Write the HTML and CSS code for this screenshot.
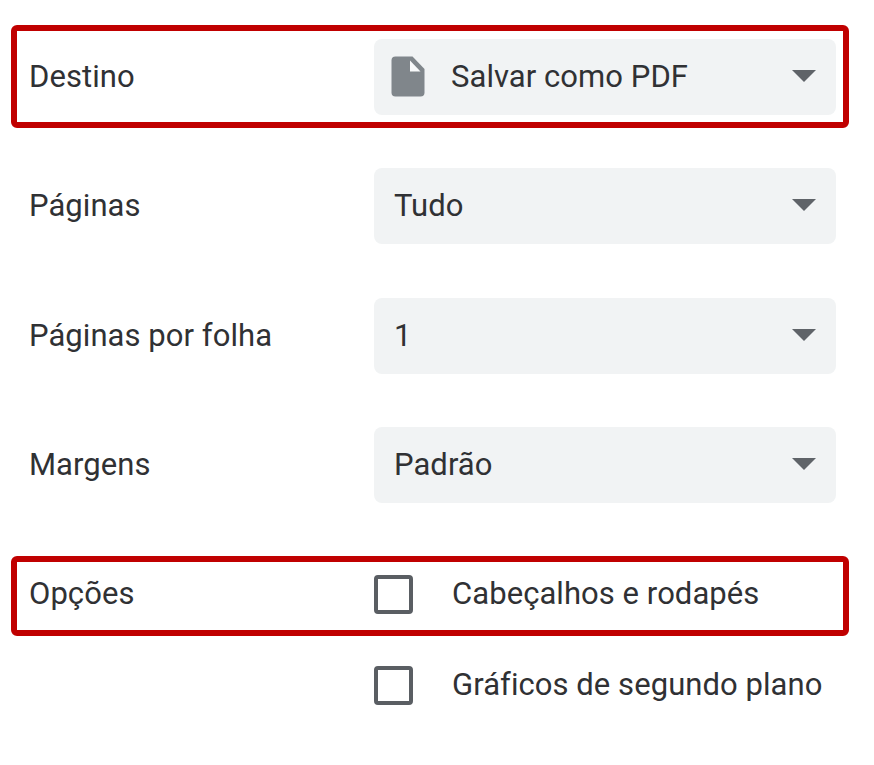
FILE: index.html
```html
<!DOCTYPE html>
<html lang="pt-BR">
<head>
<meta charset="utf-8">
<title>Imprimir</title>
<link rel="stylesheet" href="styles.css">
</head>
<body>
<main class="settings">
  <section class="row boxed destination">
    <span class="label">Destino</span>
    <div class="select">
      <svg class="file" viewBox="0 0 34 41" width="34" height="41"><path fill="#80868b" d="M4.500 .5H21.500L33.500 13V36.500Q33.500 40.500 29.500 40.500H4.500Q.5 40.500 .5 36.500V4.500Q.5 .5 4.500 .5Z"/><path fill="#f8f9fa" d="M19 4.500V15.500H29.500Z"/></svg>
      <span class="value">Salvar como PDF</span>
      <svg class="arrow" viewBox="0 0 24 12" width="24" height="12"><path d="M0 0H24L12 12Z"/></svg>
    </div>
  </section>
  <section class="row">
    <span class="label">Páginas</span>
    <div class="select"><span class="value">Tudo</span><svg class="arrow" viewBox="0 0 24 12" width="24" height="12"><path d="M0 0H24L12 12Z"/></svg></div>
  </section>
  <section class="row">
    <span class="label">Páginas por folha</span>
    <div class="select"><span class="value">1</span><svg class="arrow" viewBox="0 0 24 12" width="24" height="12"><path d="M0 0H24L12 12Z"/></svg></div>
  </section>
  <section class="row margins">
    <span class="label">Margens</span>
    <div class="select"><span class="value">Padrão</span><svg class="arrow" viewBox="0 0 24 12" width="24" height="12"><path d="M0 0H24L12 12Z"/></svg></div>
  </section>
  <section class="row boxed options">
    <span class="label">Opções</span>
    <div class="option"><span class="check"></span><span class="value">Cabeçalhos e rodapés</span></div>
  </section>
  <section class="row last">
    <span class="label"></span>
    <div class="option"><span class="check"></span><span class="value">Gráficos de segundo plano</span></div>
  </section>
</main>
</body>
</html>
```
FILE: styles.css
```css
* { box-sizing: border-box; }
body {
  margin: 0;
  background: #fff;
  color: #303134;
  font: 31px/40px Roboto, sans-serif;
  letter-spacing: 0.06px;
}
.settings {
  width: 838px;
  margin-left: 11px;
  padding-top: 25px;
}
.row {
  display: flex;
  align-items: center;
  height: 76px;
  margin-bottom: 53.5px;
  padding-left: 18px;
  white-space: nowrap;
}
.boxed {
  padding-left: 12px;
  border: 6px solid #c00000;
  border-radius: 6px;
}
.destination { height: 103px; margin-bottom: 40px; }
.margins { margin-bottom: 53px; }
.options { height: 80px; margin-bottom: 11px; padding-bottom: 4px; }
.last { margin: 0; }
.label { width: 345px; flex: none; }
.select {
  display: flex;
  align-items: center;
  width: 462px;
  height: 76px;
  padding: 0 20px;
  background: #f1f3f4;
  border-radius: 8px;
}
.destination .select { padding-left: 17px; }
.file { margin-right: 26px; }
.arrow { margin: 0 0 2px auto; fill: #5f6368; }
.option { display: flex; align-items: center; gap: 39px; }
.check {
  width: 39px;
  height: 39px;
  border: 4px solid #5a5e63;
  border-radius: 4px;
}
```
